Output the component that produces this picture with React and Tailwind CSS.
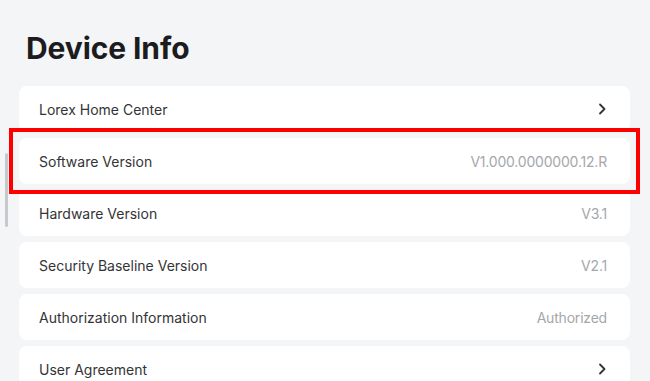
import React from "react";

const rows = [
  { label: "Lorex Home Center", chevron: true },
  { label: "Software Version", value: "V1.000.0000000.12.R", highlight: true },
  { label: "Hardware Version", value: "V3.1" },
  { label: "Security Baseline Version", value: "V2.1" },
  { label: "Authorization Information", value: "Authorized" },
  { label: "User Agreement", chevron: true },
];

const Chevron = () => (
  <svg className="w-[10px] h-[14px] text-[#333]" viewBox="0 0 10 14" fill="none">
    <path d="M3 2.5l4.5 4.5L3 11.5" stroke="currentColor" strokeWidth="1.8" strokeLinecap="round" strokeLinejoin="round" />
  </svg>
);

const App = () => {
  return (
    <div
      className="relative h-[381px] w-[650px] overflow-hidden bg-[#f4f5f7]"
      style={{ fontFamily: "Inter, 'Noto Sans', sans-serif" }}
    >
      {/* scrollbar */}
      <div className="absolute left-[5px] top-[153px] h-[74px] w-[3px] rounded-full bg-[#c8c9cc]" />

      <h1 className="pl-[26px] pt-[30px] text-[30px] font-bold leading-[36px] tracking-[-0.1px] text-[#1c1c1e]">
        Device Info
      </h1>

      <div className="mt-[20px] flex flex-col gap-[6px] pl-[19px] pr-[20px]">
        {rows.map((row) => (
          <div
            key={row.label}
            className={
              row.highlight
                ? "relative flex h-[46px] items-center justify-between rounded-[8px] bg-white pl-[20px] pr-[23px]"
                : "flex h-[46px] items-center justify-between rounded-[8px] bg-white pl-[20px] pr-[23px]"
            }
          >
            <span className="text-[14px] text-[#333436]">{row.label}</span>
            {row.chevron ? (
              <Chevron />
            ) : (
              <span className="text-[14px] tracking-[-0.2px] text-[#a5a7ab]">{row.value}</span>
            )}
            {row.highlight && (
              <div className="pointer-events-none absolute -left-[10px] -right-[10px] -top-[10px] -bottom-[10px] border-4 border-[#ff0000]" />
            )}
          </div>
        ))}
      </div>
    </div>
  );
};

export default App;
